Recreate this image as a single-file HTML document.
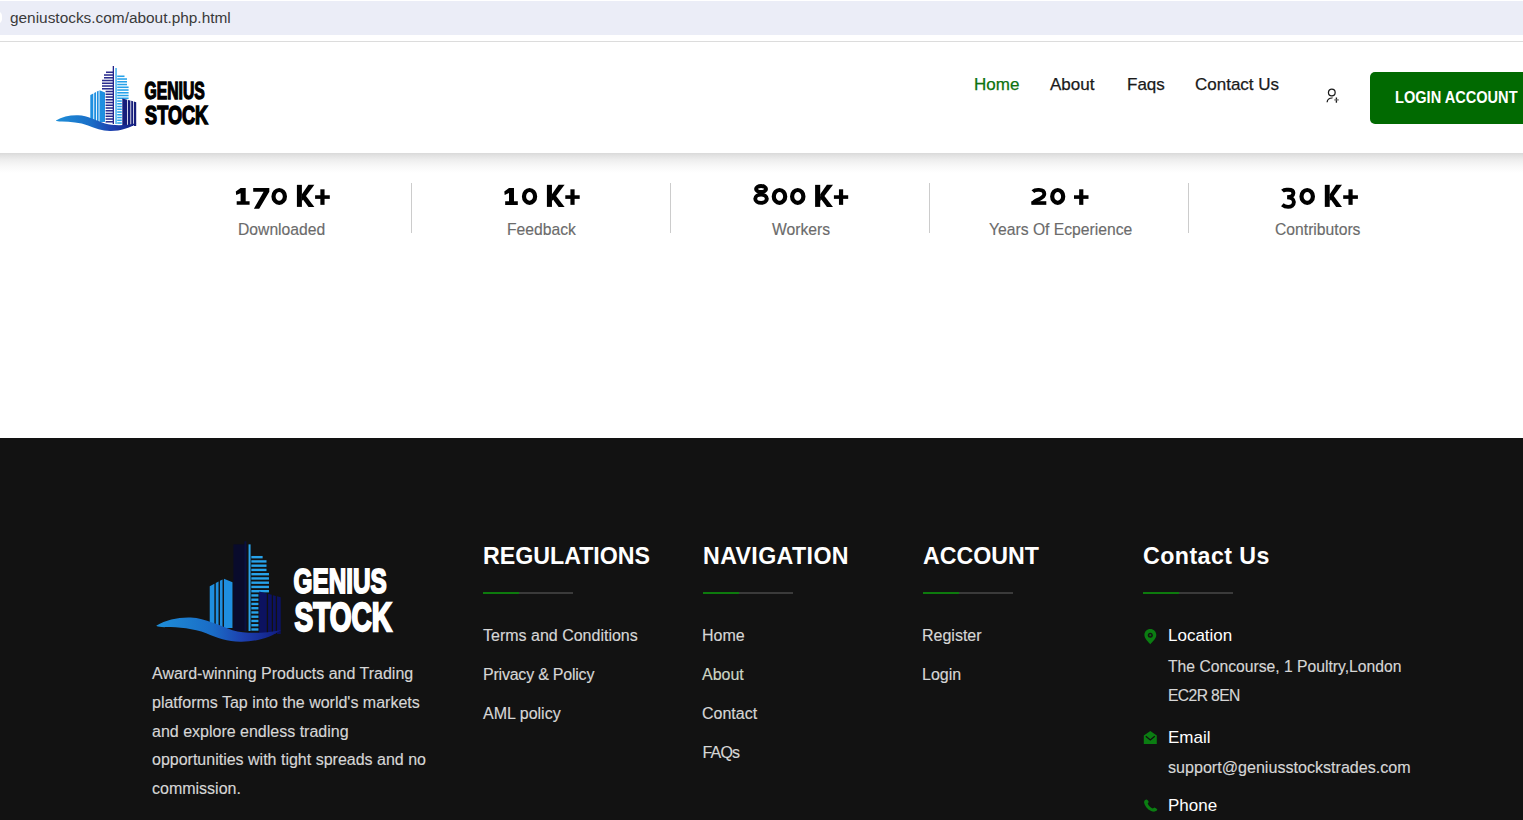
<!DOCTYPE html>
<html>
<head>
<meta charset="utf-8">
<style>
*{margin:0;padding:0;box-sizing:border-box;}
html,body{width:1523px;height:820px;overflow:hidden;background:#fff;font-family:"Liberation Sans",sans-serif;}
.a{position:absolute;white-space:nowrap;line-height:1;}
#urlbar{position:absolute;left:0;top:1px;width:1523px;height:34px;background:#ebedf7;}
#urlline{position:absolute;left:0;top:41px;width:1523px;height:1px;background:#dcdcdc;}
#header{position:absolute;left:0;top:42px;width:1523px;height:111px;background:#fff;}
#shadow{position:absolute;left:0;top:153px;width:1523px;height:20px;background:linear-gradient(#d9d9d9,#e2e2e2 12%,#eeeeee 35%,#f8f8f8 65%,#fff);}
.nav{font-size:17px;color:#1a1a1a;top:76px;-webkit-text-stroke:0.25px currentColor;}
#btn{position:absolute;left:1370px;top:72px;width:160px;height:52px;background:#016a01;border-radius:5px;}
.btxt{font-size:16px;font-weight:bold;color:#fff;transform-origin:0 0;transform:scaleX(0.911);}
.num{font-weight:bold;color:#000;font-size:30px;}
.lbl{font-size:15.7px;color:#6b6b6b;-webkit-text-stroke:0.15px currentColor;}
.div{position:absolute;top:183px;width:1px;height:50px;background:#cccccc;}
#footer{position:absolute;left:0;top:438px;width:1523px;height:382px;background:#121212;}
.fh{font-size:23.2px;font-weight:bold;color:#fff;}
.ul{position:absolute;top:592px;width:90px;height:2px;background:#3a3a3a;}
.ul i{position:absolute;left:0;top:0;width:36px;height:2px;background:#0d7a0d;}
.fl{font-size:16px;color:#d6d6d6;-webkit-text-stroke:0.15px currentColor;}
.desc{position:absolute;left:152px;top:660px;width:300px;font-size:16px;line-height:28.8px;color:#d6d6d6;white-space:normal;-webkit-text-stroke:0.15px currentColor;}
.ct{font-size:17px;color:#fff;}
.cv{font-size:15.7px;color:#d6d6d6;-webkit-text-stroke:0.15px currentColor;}
</style>
</head>
<body>
<svg width="0" height="0" style="position:absolute"><defs><symbol id="logo" viewBox="0 0 165 75">
<path d="M40.30 62.00 L40.30 35.00 L43.30 33.43 L43.30 62.00 Z" fill="#1f8fe0"/>
<path d="M44.20 62.00 L44.20 32.97 L46.00 32.03 L46.00 62.00 Z" fill="#1f8fe0"/>
<path d="M46.90 62.00 L46.90 31.56 L48.60 30.67 L48.60 62.00 Z" fill="#1f8fe0"/>
<path d="M49.50 62.00 L49.50 30.20 L55.00 32.50 L55.00 62.00 Z" fill="#1f8fe0"/>
<rect x="56" y="11.50" width="7.00" height="1.55" style="fill:var(--fin)"/>
<rect x="54" y="14.25" width="9.00" height="1.55" style="fill:var(--fin)"/>
<rect x="54" y="17.00" width="9.00" height="1.55" style="fill:var(--fin)"/>
<rect x="52" y="19.75" width="11.00" height="1.55" style="fill:var(--fin)"/>
<rect x="52" y="22.50" width="11.00" height="1.55" style="fill:var(--fin)"/>
<rect x="52" y="25.25" width="11.00" height="1.55" style="fill:var(--fin)"/>
<rect x="52" y="28.00" width="11.00" height="1.55" style="fill:var(--fin)"/>
<rect x="55.6" y="30.75" width="7.40" height="1.55" style="fill:var(--fin)"/>
<rect x="55.6" y="33.50" width="7.40" height="1.55" style="fill:var(--fin)"/>
<rect x="55.6" y="36.25" width="7.40" height="1.55" style="fill:var(--fin)"/>
<rect x="55.6" y="39.00" width="7.40" height="1.55" style="fill:var(--fin)"/>
<rect x="55.6" y="41.75" width="7.40" height="1.55" style="fill:var(--fin)"/>
<rect x="55.6" y="44.50" width="7.40" height="1.55" style="fill:var(--fin)"/>
<rect x="55.6" y="47.25" width="7.40" height="1.55" style="fill:var(--fin)"/>
<rect x="55.6" y="50.00" width="7.40" height="1.55" style="fill:var(--fin)"/>
<rect x="55.6" y="52.75" width="7.40" height="1.55" style="fill:var(--fin)"/>
<rect x="55.6" y="55.50" width="7.40" height="1.55" style="fill:var(--fin)"/>
<rect x="55.6" y="58.25" width="7.40" height="1.55" style="fill:var(--fin)"/>
<rect x="55.6" y="61.00" width="7.40" height="1.55" style="fill:var(--fin)"/>
<rect x="55.6" y="8" width="8.4" height="56" style="fill:var(--blk)"/><rect x="62.7" y="6" width="1.3" height="58" style="fill:var(--spn)"/>
<rect x="65.4" y="8" width="1.3" height="56" fill="#2aa4ec"/>
<rect x="67.2" y="15.50" width="7.30" height="1.55" fill="#27a2ea"/>
<rect x="67.2" y="18.25" width="9.80" height="1.55" fill="#27a2ea"/>
<rect x="67.2" y="21.00" width="9.80" height="1.55" fill="#27a2ea"/>
<rect x="67.2" y="23.75" width="9.80" height="1.55" fill="#27a2ea"/>
<rect x="67.2" y="26.50" width="11.40" height="1.55" fill="#27a2ea"/>
<rect x="67.2" y="29.25" width="11.40" height="1.55" fill="#27a2ea"/>
<rect x="67.2" y="32.00" width="11.40" height="1.55" fill="#27a2ea"/>
<rect x="67.2" y="34.75" width="11.40" height="1.55" fill="#27a2ea"/>
<rect x="67.2" y="37.50" width="11.40" height="1.55" fill="#27a2ea"/>
<rect x="67.2" y="40.25" width="4.60" height="1.55" fill="#27a2ea"/>
<rect x="67.2" y="43.00" width="4.60" height="1.55" fill="#27a2ea"/>
<rect x="67.2" y="45.75" width="4.60" height="1.55" fill="#27a2ea"/>
<rect x="67.2" y="48.50" width="4.60" height="1.55" fill="#27a2ea"/>
<rect x="67.2" y="51.25" width="4.60" height="1.55" fill="#27a2ea"/>
<rect x="67.2" y="54.00" width="4.60" height="1.55" fill="#27a2ea"/>
<rect x="67.2" y="56.75" width="4.60" height="1.55" fill="#27a2ea"/>
<rect x="67.2" y="59.50" width="4.60" height="1.55" fill="#27a2ea"/>
<rect x="67.2" y="62.25" width="4.60" height="1.55" fill="#27a2ea"/>
<path d="M72.3 66 L72.3 38.40 L77.2 39.74 L77.2 66 Z" style="fill:var(--rb)"/>
<path d="M78.0 66 L78.0 39.96 L80.4 40.61 L80.4 66 Z" style="fill:var(--rb)"/>
<path d="M81.2 66 L81.2 40.83 L83.0 41.33 L83.0 66 Z" style="fill:var(--rb)"/>
<path d="M83.8 66 L83.8 41.54 L86.2 42.20 L86.2 66 Z" style="fill:var(--rb)"/>
<linearGradient id="wg" x1="0" x2="1" y1="0" y2="0"><stop offset="0" stop-color="#1e8ed8"/><stop offset="0.45" stop-color="#1a6cc6"/><stop offset="0.7" stop-color="#1d3fae"/><stop offset="1" stop-color="#101c80"/></linearGradient>
<path d="M5.9 60.4 C12 57 20 55 28 55.3 C38 55.8 46 60.5 55 63.5 C64 66 76 65.5 86.5 63.3 C80 68 70 71.2 60 71 C52 70.8 45 68.5 38 65.5 C30 62.5 20 61.5 12 61.5 C9 61.6 7 61.2 5.9 60.8 Z" fill="url(#wg)"/>
<text x="94.5" y="39.2" font-family="Liberation Sans" font-weight="bold" font-size="23.2" textLength="60.2" lengthAdjust="spacingAndGlyphs" fill="currentColor" stroke="currentColor" stroke-width="1.3">GENIUS</text>
<text x="95.1" y="64.2" font-family="Liberation Sans" font-weight="bold" font-size="26.2" textLength="63" lengthAdjust="spacingAndGlyphs" fill="currentColor" stroke="currentColor" stroke-width="1.5">STOCK</text>
</symbol></defs></svg>
<div id="urlbar"></div>
<div class="a" style="left:10px;top:10px;font-size:15.4px;color:#3a3a3a;">geniustocks.com/about.php.html</div>
<div id="urlline"></div>
<div style="position:absolute;left:-8px;top:11px;width:10px;height:13px;border-radius:6px;background:#fff;"></div>

<div id="header"></div>
<div id="shadow"></div>

<!-- header logo -->
<svg id="logo1" style="position:absolute;left:50px;top:60px;color:#000;--fin:#2b2d8e;--blk:transparent;--spn:#23238a;--rb:#161d7a;" width="165" height="75" viewBox="0 0 165 75"><use href="#logo"/></svg>

<div class="a nav" style="left:974px;color:#0e720e;">Home</div>
<div class="a nav" style="left:1050px;">About</div>
<div class="a nav" style="left:1127px;">Faqs</div>
<div class="a nav" style="left:1195px;">Contact Us</div>

<svg style="position:absolute;left:1324px;top:87px;" width="18" height="18" viewBox="0 0 18 18">
 <circle cx="7.8" cy="5.4" r="3.35" fill="none" stroke="#1a1a1a" stroke-width="1.25"/>
 <path d="M3.1 15.2 C3.3 12.8 5.2 11.1 8.3 11.0" fill="none" stroke="#1a1a1a" stroke-width="1.25"/>
 <path d="M8.1 9.0 V11.2" stroke="#8a8a8a" stroke-width="1.1"/>
 <path d="M12.4 10.5 V15.7" stroke="#1a1a1a" stroke-width="1.35"/>
 <path d="M10.2 12.9 H14.8" stroke="#6a6a6a" stroke-width="1.2"/>
</svg>

<div id="btn"></div>
<div class="a btxt" style="left:1394.6px;top:90px;">LOGIN ACCOUNT</div>

<!-- stats -->
<svg style="position:absolute;left:0;top:180px;" width="1523" height="32" viewBox="0 0 1523 32" fill="#000"><path d="M240.60 8.00 L245.70 8.00 L245.70 21.15 L249.60 21.15 L249.60 24.85 L236.70 24.85 L236.70 21.15 L240.60 21.15 L240.60 13.20 L236.20 15.00 L235.80 11.50 Z"/><path d="M253.20 8.00 L269.30 8.00 L269.30 11.70 L259.20 28.70 L253.90 28.70 L263.60 11.70 L253.20 11.70 Z"/><ellipse cx="279.20" cy="16.43" rx="5.70" ry="6.43" fill="none" stroke="#000" stroke-width="4.2"/><path d="M296.90 4.85 H301.90 V26.90 H296.90 Z"/><path d="M301.90 14.15 L308.40 4.85 H314.40 L304.70 17.65 L301.90 21.05 Z"/><path d="M304.30 13.75 L314.40 26.90 H308.50 L301.50 17.45 Z"/><path d="M320.35 9.30 H324.55 V24.85 H320.35 Z"/><path d="M315.10 15.27 H329.80 V18.88 H315.10 Z"/><path d="M509.00 7.90 L513.99 7.90 L513.99 21.25 L517.80 21.25 L517.80 24.95 L505.18 24.95 L505.18 21.25 L509.00 21.25 L509.00 13.10 L504.69 14.90 L504.30 11.40 Z"/><ellipse cx="529.55" cy="16.43" rx="5.55" ry="6.43" fill="none" stroke="#000" stroke-width="4.2"/><path d="M546.90 4.85 H551.96 V26.90 H546.90 Z"/><path d="M551.96 14.15 L558.53 4.85 H564.60 L554.79 17.65 L551.96 21.05 Z"/><path d="M554.38 13.75 L564.60 26.90 H558.63 L551.55 17.45 Z"/><path d="M570.40 9.30 H574.60 V24.85 H570.40 Z"/><path d="M565.30 15.27 H579.70 V18.88 H565.30 Z"/><ellipse cx="761.05" cy="8.95" rx="5.00" ry="3.00" fill="none" stroke="#000" stroke-width="3.9"/><ellipse cx="761.05" cy="18.72" rx="5.80" ry="4.17" fill="none" stroke="#000" stroke-width="3.9"/><ellipse cx="779.50" cy="16.43" rx="5.70" ry="6.43" fill="none" stroke="#000" stroke-width="4.2"/><ellipse cx="797.75" cy="16.43" rx="5.65" ry="6.43" fill="none" stroke="#000" stroke-width="4.2"/><path d="M815.10 4.85 H820.21 V26.90 H815.10 Z"/><path d="M820.21 14.15 L826.86 4.85 H833.00 L823.08 17.65 L820.21 21.05 Z"/><path d="M822.67 13.75 L833.00 26.90 H826.97 L819.81 17.45 Z"/><path d="M838.95 9.30 H843.15 V24.85 H838.95 Z"/><path d="M833.90 15.27 H848.20 V18.88 H833.90 Z"/><path d="M1032.90 11.60 C1034.90 9.60 1037.20 9.90 1039.00 9.90 C1042.40 9.90 1044.30 11.50 1044.30 14.00 C1044.30 16.80 1041.40 18.00 1038.40 19.50 C1034.90 21.20 1033.30 22.00 1033.30 23.50" fill="none" stroke="#000" stroke-width="3.9"/><path d="M1031.40 21.20 H1046.30 V24.85 H1031.40 Z"/><ellipse cx="1057.70" cy="16.43" rx="5.50" ry="6.43" fill="none" stroke="#000" stroke-width="4.2"/><path d="M1079.15 9.30 H1083.35 V24.85 H1079.15 Z"/><path d="M1074.00 15.27 H1088.50 V18.88 H1074.00 Z"/><path d="M1282.50 11.10 C1284.60 9.10 1286.60 9.80 1288.40 9.80 C1291.60 9.80 1293.40 11.20 1293.40 13.10 C1293.40 15.50 1290.60 17.30 1287.10 17.30 C1291.60 17.30 1293.90 19.40 1293.90 22.10 C1293.90 25.10 1291.30 26.90 1288.10 26.90 C1285.60 26.90 1283.60 25.90 1282.30 24.80" fill="none" stroke="#000" stroke-width="3.9"/><ellipse cx="1307.20" cy="16.43" rx="5.70" ry="6.43" fill="none" stroke="#000" stroke-width="4.2"/><path d="M1324.80 4.85 H1329.71 V26.90 H1324.80 Z"/><path d="M1329.71 14.15 L1336.10 4.85 H1342.00 L1332.47 17.65 L1329.71 21.05 Z"/><path d="M1332.07 13.75 L1342.00 26.90 H1336.20 L1329.32 17.45 Z"/><path d="M1348.45 9.30 H1352.65 V24.85 H1348.45 Z"/><path d="M1343.20 15.27 H1357.90 V18.88 H1343.20 Z"/></svg>
<div class="a lbl" style="left:238px;top:222px;">Downloaded</div>
<div class="div" style="left:411px;"></div>
<div class="a lbl" style="left:507px;top:222px;">Feedback</div>
<div class="div" style="left:670px;"></div>
<div class="a lbl" style="left:772px;top:222px;">Workers</div>
<div class="div" style="left:929px;"></div>
<div class="a lbl" style="left:989px;top:222px;">Years Of Ecperience</div>
<div class="div" style="left:1188px;"></div>
<div class="a lbl" style="left:1275px;top:222px;">Contributors</div>

<!-- footer -->
<div id="footer"></div>
<svg id="logo2" style="position:absolute;left:146.7px;top:531.9px;color:#fff;--fin:transparent;--blk:#090b2c;--spn:#0b0f3e;--rb:#0c1260;" width="256" height="116" viewBox="0 0 165 75"><use href="#logo"/></svg>
<div class="desc">Award-winning Products and Trading<br>platforms Tap into the world's markets<br>and explore endless trading<br>opportunities with tight spreads and no<br>commission.</div>

<div class="a fh" style="left:483px;top:545px;">REGULATIONS</div>
<div class="ul" style="left:483px;"><i></i></div>
<div class="a fl" style="left:483px;top:628px;">Terms and Conditions</div>
<div class="a fl" style="left:483px;top:667px;letter-spacing:-0.22px;">Privacy &amp; Policy</div>
<div class="a fl" style="left:483px;top:706px;">AML policy</div>

<div class="a fh" style="left:703px;top:545px;letter-spacing:0.38px;">NAVIGATION</div>
<div class="ul" style="left:703px;"><i></i></div>
<div class="a fl" style="left:702px;top:628px;">Home</div>
<div class="a fl" style="left:702px;top:667px;color:#cbd5c4;">About</div>
<div class="a fl" style="left:702px;top:706px;">Contact</div>
<div class="a fl" style="left:702.5px;top:745px;letter-spacing:-0.8px;">FAQs</div>

<div class="a fh" style="left:923px;top:545px;">ACCOUNT</div>
<div class="ul" style="left:923px;"><i></i></div>
<div class="a fl" style="left:922px;top:628px;">Register</div>
<div class="a fl" style="left:922px;top:667px;">Login</div>

<div class="a fh" style="left:1143px;top:545px;letter-spacing:0.45px;">Contact Us</div>
<div class="ul" style="left:1143px;"><i></i></div>
<svg style="position:absolute;left:1143px;top:628px;" width="16" height="17" viewBox="0 0 16 17">
 <path d="M7.3 16.2 C5 13.5 1.4 10.4 1.4 6.9 C1.4 3.5 4 0.9 7.3 0.9 C10.6 0.9 13.3 3.5 13.3 6.9 C13.3 10.4 9.6 13.5 7.3 16.2 Z" fill="#0b7d12"/>
 <circle cx="7.3" cy="7.2" r="2.5" fill="#141414"/><circle cx="7.3" cy="7.2" r="1.1" fill="#0b6a10"/>
</svg>
<svg style="position:absolute;left:1143px;top:730px;" width="16" height="16" viewBox="0 0 16 16">
 <path d="M0.8 5.5 L7.3 1 L13.8 5.5 V14.1 H0.8 Z" fill="#0b7d12"/>
 <path d="M2.8 6.2 L7.3 9.9 L11.8 6.2" fill="none" stroke="#101010" stroke-width="1.3"/>
</svg>
<svg style="position:absolute;left:1143px;top:799px;" width="16" height="14" viewBox="0 0 16 14">
 <path d="M2.6 0.7 C1.3 1.4 0.8 2.6 1.2 4.1 C2.2 8 5.6 11.6 9.6 12.6 C11.2 13 12.5 12.6 13.9 11.6 L14.3 10.6 C13.6 9.6 12.5 8.9 11.3 8.5 L9.8 9.6 C7.5 8.7 5.7 6.8 4.7 4.5 L5.8 3.1 C5.4 1.9 4.7 0.9 3.7 0.4 Z" fill="#0b7d12"/>
</svg>
<div class="a ct" style="left:1168px;top:627px;">Location</div>
<div class="a cv" style="left:1168px;top:659px;">The Concourse, 1 Poultry,London</div>
<div class="a cv" style="left:1168px;top:688px;letter-spacing:-0.62px;">EC2R 8EN</div>
<div class="a ct" style="left:1168px;top:728.6px;">Email</div>
<div class="a cv" style="left:1168px;top:759px;font-size:16.1px;">support@geniusstockstrades.com</div>
<div class="a ct" style="left:1168px;top:797px;">Phone</div>
</body>
</html>
